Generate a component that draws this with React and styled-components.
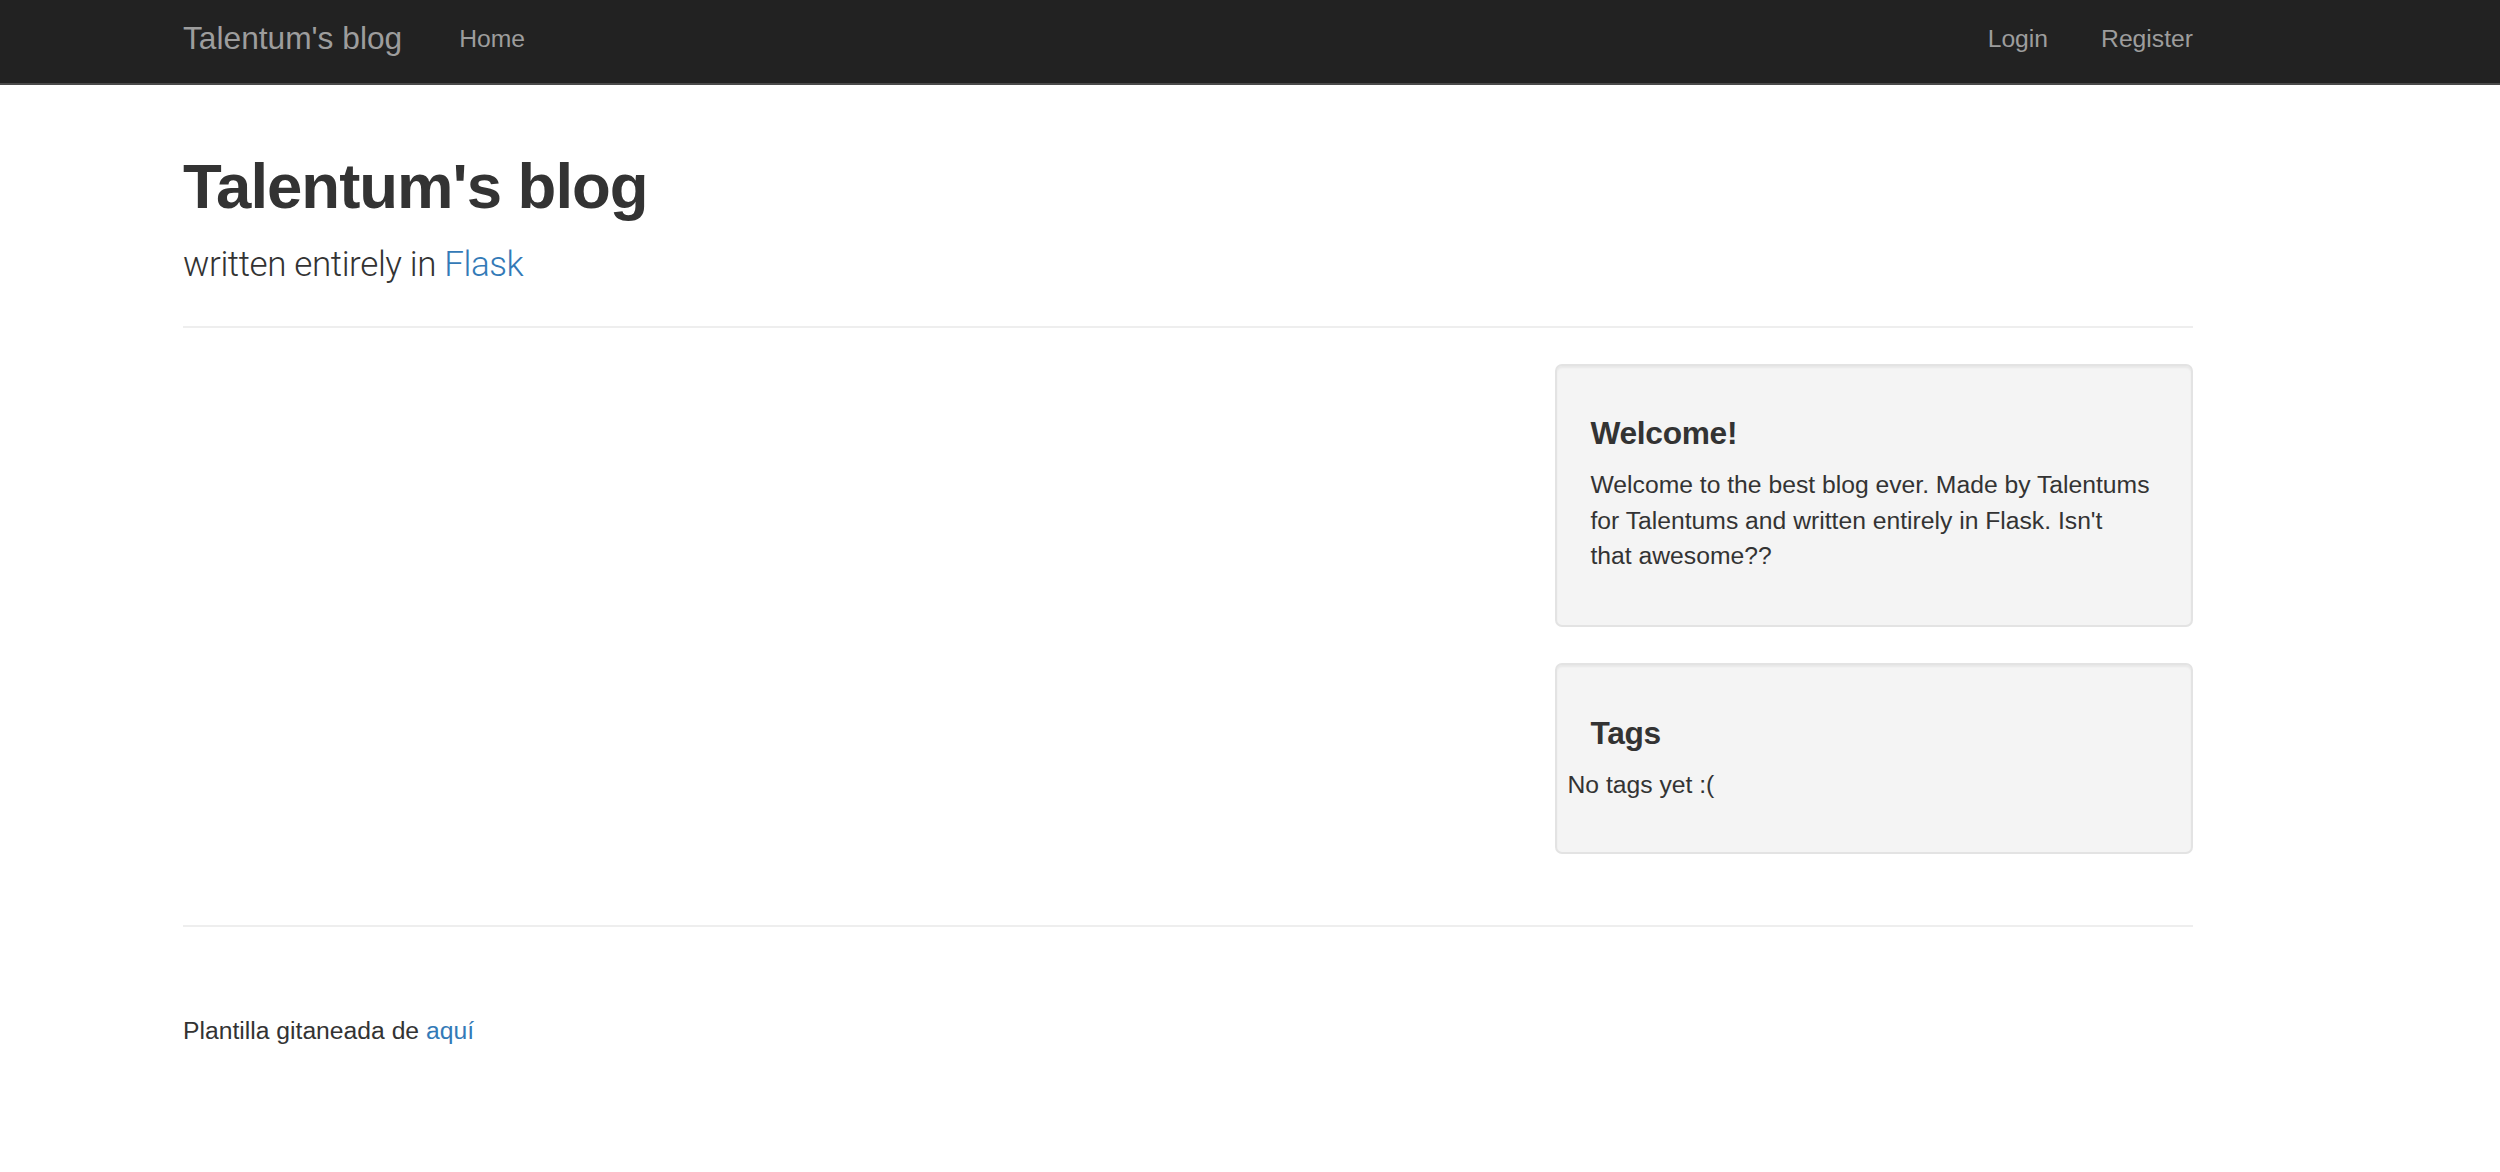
import React from "react";
import styled, { createGlobalStyle } from "styled-components";

const GlobalStyle = createGlobalStyle`
  body {
    margin: 0;
    background: #fff;
    color: #333;
    font-family: "Liberation Sans", Helvetica, Arial, sans-serif;
    font-size: 24.7px;
    line-height: 1.42857;
  }
  a {
    color: #337ab7;
    text-decoration: none;
  }
`;

const Navbar = styled.nav`
  height: 83px;
  background-color: #222;
  border-bottom: 2px solid #4a4a4a;
`;

const NavInner = styled.div`
  width: 2010px;
  margin-left: 183px;
  height: 100%;
  box-sizing: border-box;
  padding-bottom: 5px;
  display: flex;
  align-items: center;
`;

const Brand = styled.a`
  font-size: 31.7px;
  color: #9d9d9d;
  margin-right: 57px;
`;

const NavLinks = styled.div`
  display: flex;
  align-items: center;
  gap: 53px;
  margin-left: ${(p) => (p.$right ? "auto" : "0")};
`;

const NavLink = styled.a`
  color: #9d9d9d;
  font-size: 24.7px;
`;

const Container = styled.div`
  width: 2010px;
  margin-left: 183px;
`;

const PageHeader = styled.header`
  margin-top: 67px;
  padding-bottom: 34px;
  border-bottom: 2px solid #eee;
  margin-bottom: 36px;
`;

const Title = styled.h1`
  margin: 0 0 17.6px;
  font-size: 63.5px;
  line-height: 1.1;
  font-weight: 700;
  letter-spacing: -1px;
  color: #333;
`;

const Lead = styled.p`
  margin: 0;
  font-family: Roboto, "Liberation Sans", sans-serif;
  font-size: 35px;
  font-weight: 300;
  line-height: 1.5;
  letter-spacing: -0.4px;
  color: #333;
`;

const Row = styled.div`
  display: grid;
  grid-template-columns: 1fr 638px;
`;

const Sidebar = styled.aside`
  display: flex;
  flex-direction: column;
  gap: 36px;
`;

const Well = styled.div`
  background-color: #f4f4f4;
  border: 2px solid #e3e3e3;
  border-radius: 7px;
  box-shadow: inset 0 2px 2px rgba(0, 0, 0, 0.05);
  padding: 34.5px 33.5px;
`;

const WellTitle = styled.h4`
  margin: 16px 0;
  font-size: 31.7px;
  line-height: 1.1;
  font-weight: 700;
  letter-spacing: -0.3px;
  color: #333;
`;

const WellText = styled.p`
  margin: ${(p) => (p.$outdent ? "2px 0 15.6px -23px" : "0 0 17.6px")};
`;

const NoWrap = styled.span`
  white-space: nowrap;
`;

const FooterRule = styled.hr`
  margin: 71px 0 0;
  border: 0;
  border-top: 2px solid #eee;
`;

const Footer = styled.footer`
  padding-top: 86px;
  padding-bottom: 60px;
`;

export default function App() {
  return (
    <>
      <GlobalStyle />
      <Navbar>
        <NavInner>
          <Brand href="#">Talentum's blog</Brand>
          <NavLinks>
            <NavLink href="#">Home</NavLink>
          </NavLinks>
          <NavLinks $right>
            <NavLink href="#">Login</NavLink>
            <NavLink href="#">Register</NavLink>
          </NavLinks>
        </NavInner>
      </Navbar>

      <Container>
        <PageHeader>
          <Title>Talentum's blog</Title>
          <Lead>
            written entirely in <a href="#">Flask</a>
          </Lead>
        </PageHeader>

        <Row>
          <div />
          <Sidebar>
            <Well>
              <WellTitle>Welcome!</WellTitle>
              <WellText>
                Welcome to the best blog ever. Made by Talentums for Talentums
                and written entirely in Flask. Isn't <NoWrap>that awesome??</NoWrap>
              </WellText>
            </Well>
            <Well>
              <WellTitle>Tags</WellTitle>
              <WellText $outdent>No tags yet :(</WellText>
            </Well>
          </Sidebar>
        </Row>

        <FooterRule />
        <Footer>
          Plantilla gitaneada de <a href="#">aquí</a>
        </Footer>
      </Container>
    </>
  );
}
